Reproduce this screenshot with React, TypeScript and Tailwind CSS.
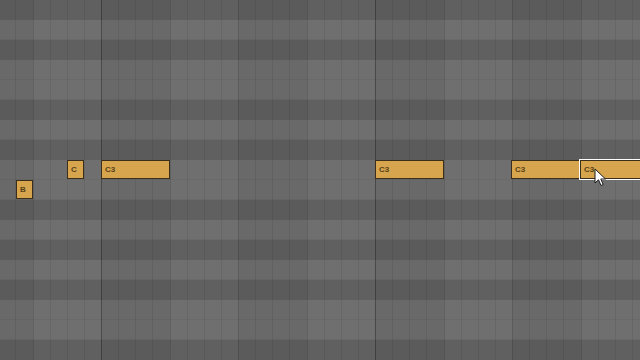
import React from "react";

// piano rows from top (G#) down to D#, 20px each
const rows = ["G#", "G", "F#", "F", "E", "D#", "D", "C#", "C", "B", "A#", "A", "G#", "G", "F#", "F", "E", "D#"];

const notes = [
  { label: "B", x: 16, row: 9, w: 17 },
  { label: "C", x: 67, row: 8, w: 17 },
  { label: "C3", x: 101, row: 8, w: 69 },
  { label: "C3", x: 375, row: 8, w: 69 },
  { label: "C3", x: 511, row: 8, w: 69 },
];

const beats = Array.from({ length: 11 }, (_, i) => i);

function Cursor() {
  return (
    <svg className="absolute left-[594px] top-[168px]" width="13" height="19" viewBox="0 0 13 19">
      <path
        d="M1 1 L1 15 L4.5 11.8 L7 17.5 L9.2 16.5 L6.8 11 L11.5 11 Z"
        fill="#ffffff"
        stroke="#1a1a1a"
        strokeWidth="1"
        strokeLinejoin="round"
      />
    </svg>
  );
}

export default function App() {
  return (
    <div className="relative w-[640px] h-[360px] overflow-hidden bg-[#666666] font-['Liberation_Sans',Arial,sans-serif]">
      {/* key rows */}
      <div className="flex flex-col">
        {rows.map((r, i) => (
          <div
            key={i}
            className={
              r.includes("#")
                ? "h-[20px] bg-[#606060]"
                : "h-[20px] bg-[#6f6f6f] border-b border-[#6a6a6a]"
            }
          />
        ))}
      </div>

      {/* time grid */}
      <div className="absolute top-0 bottom-0 left-[-36px] flex">
        {beats.map((b) => (
          <div
            key={b}
            className={
              "w-[68.5px] h-full shrink-0 flex " +
              (b % 2 === 0 ? "bg-black/[0.05] " : "") +
              (b % 4 === 2 ? "border-l border-black/30" : "border-l border-black/[0.12]")
            }
          >
            <div className="flex-1" />
            <div className="flex-1 border-l border-black/[0.07]" />
            <div className="flex-1 border-l border-black/[0.07]" />
            <div className="flex-1 border-l border-black/[0.07]" />
          </div>
        ))}
      </div>

      {/* notes */}
      {notes.map((n, i) => (
        <div
          key={i}
          className="absolute h-[19px] bg-[#d6a54d] border border-[#3b2f1c] flex items-center pl-[3px] text-[8px] font-bold text-[#574216]"
          style={{ left: n.x, top: n.row * 20, width: n.w }}
        >
          {n.label}
        </div>
      ))}

      {/* selected note */}
      <div className="absolute left-[579px] top-[159px] w-[80px] h-[21px] border border-white">
        <div className="w-full h-full bg-[#d6a54d] border border-[#3b2f1c] flex items-center pl-[3px] text-[8px] font-bold text-[#574216]">
          C3
        </div>
      </div>

      <Cursor />
    </div>
  );
}
